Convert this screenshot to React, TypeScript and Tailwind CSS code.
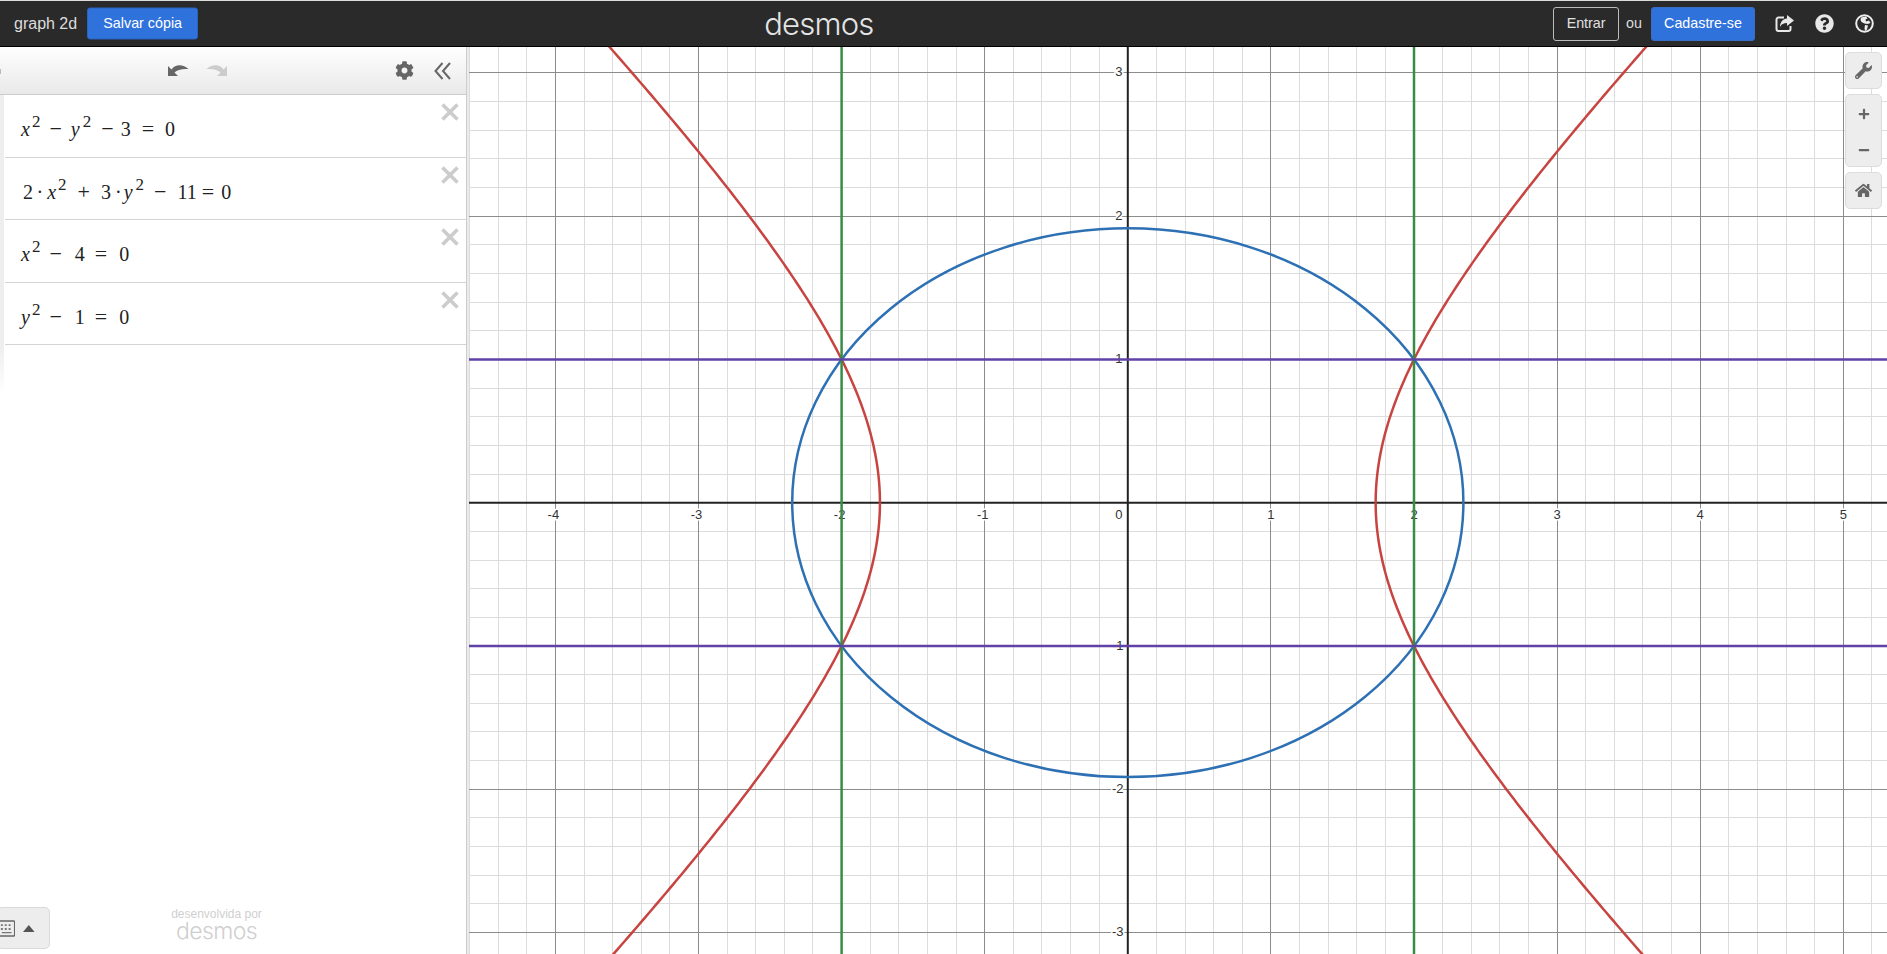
import {
  FaCog,
  FaHome,
  FaMinus,
  FaPlus,
  FaQuestionCircle,
  FaWrench,
} from "react-icons/fa";

// graph coordinates, measured from the svg's top-left corner
const OX = 658.8;
const OY = 455.7;
const UX = 143.1;
const UY = 143.3;
const W = 1418;
const H = 907;

const px = (x: number) => OX + x * UX;
const py = (y: number) => OY - y * UY;
const snap = (v: number) => Math.floor(v) + 0.5;

const range = (from: number, to: number) => {
  const out: number[] = [];
  for (let i = from; i <= to; i++) out.push(i);
  return out;
};

const hyperbola = (sx: number, sy: number) => {
  let d = "";
  for (let i = 0; i <= 120; i++) {
    const y = (i / 120) * 3.4;
    const x = Math.sqrt(3 + y * y);
    d += `${i === 0 ? "M" : "L"}${px(sx * x).toFixed(2)} ${py(sy * y).toFixed(2)}`;
  }
  return d;
};

const Tick = ({ x, y, children }: { x: number; y: number; children: string }) => (
  <text
    x={x}
    y={y}
    fontSize="13"
    fill="#333"
    stroke="#fff"
    strokeWidth="3"
    paintOrder="stroke"
    textAnchor="middle"
    fontFamily="'Liberation Sans', Arial, sans-serif"
  >
    {children}
  </text>
);

const Graph = () => (
  <svg viewBox={`0 0 ${W} ${H}`} className="block h-full w-full">
    {/* minor grid */}
    <g stroke="#dcdcdc" strokeWidth="1" shapeRendering="crispEdges">
      {range(-24, 26).map((i) => (
        <line key={i} x1={snap(px(i / 5))} x2={snap(px(i / 5))} y1={0} y2={H} />
      ))}
      {range(-17, 17).map((i) => (
        <line key={i} y1={snap(py(i / 5))} y2={snap(py(i / 5))} x1={0} x2={W} />
      ))}
    </g>
    {/* major grid */}
    <g stroke="#8c8c8c" strokeWidth="1" shapeRendering="crispEdges">
      {[-4, -3, -2, -1, 1, 2, 3, 4, 5].map((i) => (
        <line key={i} x1={snap(px(i))} x2={snap(px(i))} y1={0} y2={H} />
      ))}
      {[-3, -2, -1, 1, 2, 3].map((i) => (
        <line key={i} y1={snap(py(i))} y2={snap(py(i))} x1={0} x2={W} />
      ))}
    </g>
    {/* axes */}
    <g stroke="#222" strokeWidth="2">
      <line x1={px(0)} x2={px(0)} y1={0} y2={H} />
      <line y1={OY} y2={OY} x1={0} x2={W} />
    </g>
    {/* tick labels */}
    {[-4, -3, -2, -1].map((i) => (
      <Tick key={i} x={px(i) - 2} y={OY + 16}>{String(i)}</Tick>
    ))}
    {[1, 2, 3, 4, 5].map((i) => (
      <Tick key={i} x={px(i)} y={OY + 16}>{String(i)}</Tick>
    ))}
    <Tick x={px(0) - 9} y={OY + 16}>0</Tick>
    {[3, 2, 1].map((i) => (
      <Tick key={i} x={px(0) - 9} y={py(i) + 3.5}>{String(i)}</Tick>
    ))}
    {[-1, -2, -3].map((i) => (
      <Tick key={i} x={px(0) - 10} y={py(i) + 3.5}>{String(i)}</Tick>
    ))}
    {/* curves */}
    <g fill="none" strokeWidth="2.5">
      <g stroke="#c74440">
        <path d={hyperbola(1, 1)} />
        <path d={hyperbola(1, -1)} />
        <path d={hyperbola(-1, 1)} />
        <path d={hyperbola(-1, -1)} />
      </g>
      <ellipse cx={OX} cy={OY} rx={Math.sqrt(5.5) * UX} ry={Math.sqrt(11 / 3) * UY} stroke="#2d70b3" />
      <g stroke="#388c46">
        <line x1={px(-2)} x2={px(-2)} y1={0} y2={H} />
        <line x1={px(2)} x2={px(2)} y1={0} y2={H} />
      </g>
      <g stroke="#6042a6">
        <line y1={py(1)} y2={py(1)} x1={0} x2={W} />
        <line y1={py(-1)} y2={py(-1)} x1={0} x2={W} />
      </g>
    </g>
  </svg>
);

const Globe = () => (
  <svg width="19" height="19" viewBox="0 0 19 19">
    <circle cx="9.5" cy="9.5" r="8.3" fill="#2a2a2a" stroke="#eee" strokeWidth="2" />
    <path d="M6 3.5l5-1 1.5 2-2 1 .5 2 3-1 1.5 2.5-3 1-3-.5-3-1.500-1-2zM10 11l3 .5-1 4-2 1.500-.5-3z" fill="#eee" />
  </svg>
);

const ShareBox = () => (
  <svg width="19" height="19" viewBox="0 0 19 19">
    <path d="M9 3.500H3.500a2 2 0 0 0-2 2V15a2 2 0 0 0 2 2h10a2 2 0 0 0 2-2v-3" fill="none" stroke="currentColor" strokeWidth="2" />
    <path d="M12 1l7 5.500-7 5.500V9c-3.500 0-5.500 1-7 4 0-5 3-8 7-8.500z" fill="currentColor" />
  </svg>
);

const UndoArrow = ({ className }: { className: string }) => (
  <svg width="21" height="13" viewBox="0 0 21 13" className={className}>
    <path d="M0 2v10h10L6.500 8.500C9 6 14 4.500 20.500 5 16 1 8-1 3.500 5.500z" fill="currentColor" />
  </svg>
);

const CloseX = () => (
  <svg width="18" height="18" viewBox="0 0 18 18" className="absolute right-[7px] top-[8px]">
    <path d="M1.500 1.500l15 15M16.500 1.500l-15 15" stroke="#ccc" strokeWidth="3.600" />
  </svg>
);

const rowClass =
  "relative flex h-[62.5px] items-baseline border-b border-[#d4d4d4] pt-[22px] text-[20px] leading-[24px] text-[#222]";

const V = ({ c, ml }: { c: string; ml: string }) => <i className={ml}>{c}</i>;
const Sq = ({ ml }: { ml: string }) => <span className={`relative -top-[9px] text-[17px] leading-none ${ml}`}>2</span>;
const Op = ({ c, ml }: { c: string; ml: string }) => <span className={`text-[22px] leading-none ${ml}`}>{c}</span>;

const TopBar = () => (
  <header className="flex h-[47px] shrink-0 items-center border-b border-t border-b-black border-t-[#dcdcdc] bg-[#2a2a2a] text-[14.3px] text-[#ddd]">
    <span className="ml-[14px] text-[16px]">graph 2d</span>
    <button className="ml-[10px] h-[32px] w-[111px] -translate-y-[0.5px] rounded-[3px] border border-[#2a62c0] bg-[#2f72dc] text-white">
      Salvar cópia
    </button>
    <span className="ml-[566px] font-['Inter',sans-serif] text-[31px] font-light leading-none tracking-[-0.8px] text-[#e4e4e4]">
      desmos
    </span>
    <div className="ml-auto flex items-center">
      <button className="h-[34px] w-[66px] rounded-[3px] border border-[#bbb] text-[#e0e0e0]">Entrar</button>
      <span className="ml-[7px]">ou</span>
      <button className="ml-[9px] h-[34px] w-[104px] rounded-[3px] border border-[#3a6ec4] bg-[#2f72dc] text-white">
        Cadastre-se
      </button>
      <div className="ml-[20px] mr-[13px] flex items-center gap-[21px] text-[#e8e8e8]">
        <ShareBox />
        <FaQuestionCircle size={19} />
        <Globe />
      </div>
    </div>
  </header>
);

const ExpressionPanel = () => (
  <aside className="relative flex w-[467px] shrink-0 flex-col border-r border-[#ccc] bg-white font-['Liberation_Serif',serif]">
    <div className="relative flex h-[48px] shrink-0 items-center border-b border-[#ccc] bg-gradient-to-b from-white to-[#e9e9e9]">
      <div className="absolute left-0 top-[22px] h-[5px] w-[1px] bg-[#bbb]" />
      <UndoArrow className="ml-[168px] text-[#666]" />
      <UndoArrow className="ml-[17px] -scale-x-100 text-[#ccc]" />
      <FaCog size={19} className="ml-[168px] text-[#666]" />
      <svg width="18" height="18" viewBox="0 0 18 18" className="ml-[20px]">
        <path d="M8.500 1L1.500 9l7 8M16 1L9 9l7 8" fill="none" stroke="#666" strokeWidth="2" />
      </svg>
    </div>

    <div className="border-l-4 border-[#eee] pl-[1px]">
      <div className={rowClass}>
        <V c="x" ml="ml-[16px]" />
        <Sq ml="ml-[2px]" />
        <Op c="−" ml="ml-[9px]" />
        <V c="y" ml="ml-[9px]" />
        <Sq ml="ml-[3px]" />
        <Op c="−" ml="ml-[10px]" />
        <span className="ml-[7px]">3</span>
        <Op c="=" ml="ml-[11px]" />
        <span className="ml-[11px]">0</span>
        <CloseX />
      </div>
      <div className={rowClass}>
        <span className="ml-[18px]">2</span>
        <span className="ml-[3.5px]">·</span>
        <V c="x" ml="ml-[4px]" />
        <Sq ml="ml-[2px]" />
        <Op c="+" ml="ml-[11px]" />
        <span className="ml-[11px]">3</span>
        <span className="ml-[4px]">·</span>
        <V c="y" ml="ml-[2px]" />
        <Sq ml="ml-[3px]" />
        <Op c="−" ml="ml-[10px]" />
        <span className="ml-[11px]">11</span>
        <Op c="=" ml="ml-[5px]" />
        <span className="ml-[7px]">0</span>
        <CloseX />
      </div>
      <div className={rowClass}>
        <V c="x" ml="ml-[16px]" />
        <Sq ml="ml-[2px]" />
        <Op c="−" ml="ml-[9px]" />
        <span className="ml-[13px]">4</span>
        <Op c="=" ml="ml-[10px]" />
        <span className="ml-[12px]">0</span>
        <CloseX />
      </div>
      <div className={rowClass}>
        <V c="y" ml="ml-[16px]" />
        <Sq ml="ml-[2px]" />
        <Op c="−" ml="ml-[9px]" />
        <span className="ml-[13px]">1</span>
        <Op c="=" ml="ml-[10px]" />
        <span className="ml-[12px]">0</span>
        <CloseX />
      </div>
    </div>
    <div className="h-[50px] w-[4px] bg-gradient-to-b from-[#eee] to-white" />

    {/* footer */}
    <div className="mt-auto mb-[13px] flex flex-col items-center pr-[33px] font-['Liberation_Sans',sans-serif] text-[#cfcfcf]">
      <span className="text-[12px] leading-[13px]">desenvolvida por</span>
      <span className="font-['Inter',sans-serif] text-[23px] font-light leading-[20px] tracking-[-0.6px]">desmos</span>
    </div>

    <div className="absolute -left-[3px] bottom-[5px] flex h-[42px] w-[53px] items-center justify-end gap-[8px] rounded-[5px] border border-[#d9d9d9] bg-[#ededed] pr-[14px]">
      <svg width="18" height="17" viewBox="0 0 18 17">
        <rect x="0.750" y="0.750" width="16.500" height="15.500" rx="1" fill="none" stroke="#666" strokeWidth="1.500" />
        <path d="M3 4h2v2H3zM7 4h2v2H7zM11 4h2v2h-2zM3 8h2v2H3zM7 8h2v2H7zM11 8h2v2h-2zM4 12h10v1.500H4z" fill="#777" />
      </svg>
      <svg width="12" height="7" viewBox="0 0 12 7">
        <path d="M6 0l6 7H0z" fill="#555" />
      </svg>
    </div>
  </aside>
);

const GraphButton = ({ children }: { children: React.ReactNode }) => (
  <div className="flex h-[37px] w-[37px] items-center justify-center rounded-[5px] border border-[#dcdcdc] bg-[#ededed] text-[#666]">
    {children}
  </div>
);

const App = () => {
  return (
    <div className="flex h-screen w-full flex-col overflow-hidden bg-white font-['Liberation_Sans',Arial,sans-serif]">
      <TopBar />
      <div className="flex min-h-0 flex-1">
        <ExpressionPanel />
        <div className="w-[2px] shrink-0 bg-[#ebebeb]" />
        <main className="relative min-w-0 flex-1">
          <Graph />
          <div className="absolute right-[5px] top-[5px] flex flex-col gap-[5px]">
            <GraphButton>
              <FaWrench size={17} />
            </GraphButton>
            <div className="flex h-[73px] w-[37px] flex-col items-center justify-between rounded-[5px] border border-[#dcdcdc] bg-[#ededed] pb-[10px] pt-[13px] text-[#666]">
              <FaPlus size={12} />
              <FaMinus size={12} />
            </div>
            <GraphButton>
              <FaHome size={17} />
            </GraphButton>
          </div>
        </main>
      </div>
    </div>
  );
};

export default App;
